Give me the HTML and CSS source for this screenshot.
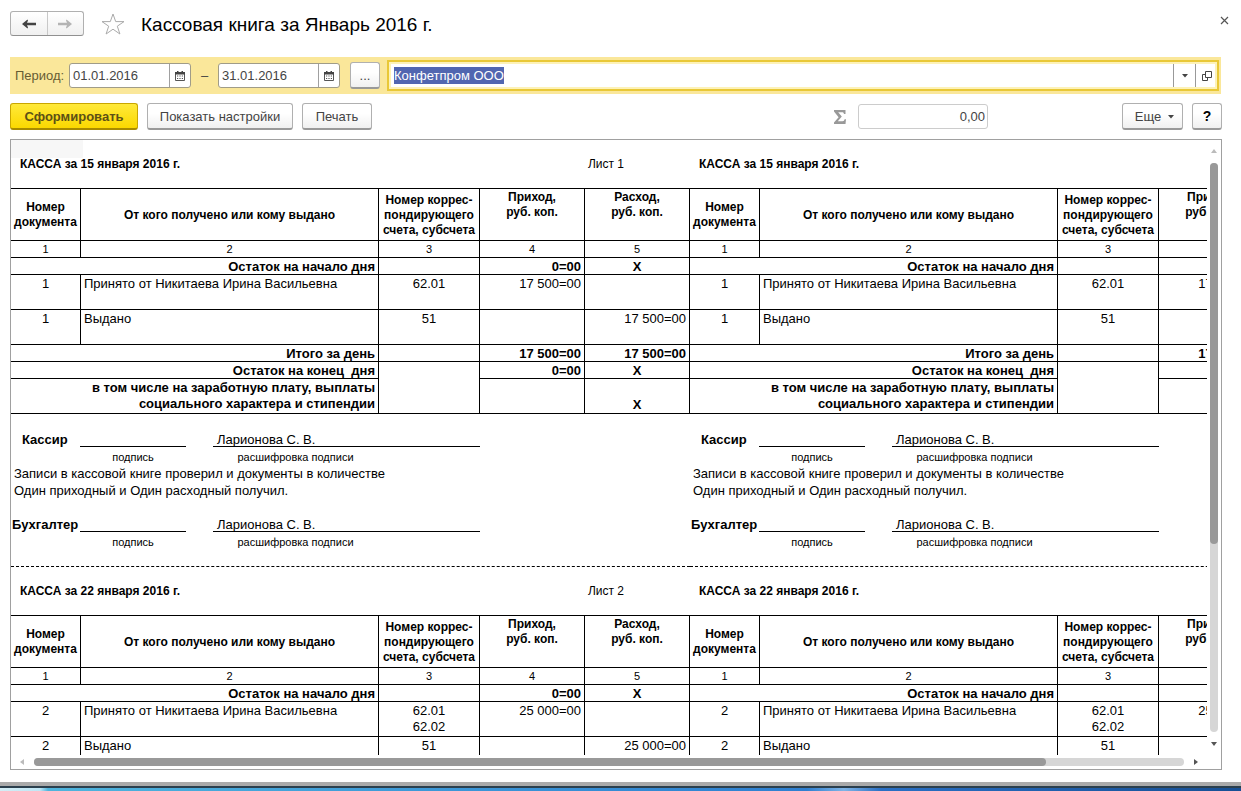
FILE: index.html
```html
<!DOCTYPE html>
<html lang="ru">
<head>
<meta charset="utf-8">
<title>Кассовая книга за Январь 2016 г.</title>
<link rel="stylesheet" href="styles.css">
</head>
<body>
<div class="window">
  <header class="titlebar">
    <div class="nav">
      <button class="nav-btn" type="button" aria-label="Назад"><svg width="14" height="10" viewBox="0 0 14 10"><path d="M0 5 5.500.5 6 1.500 5 3.800H14v2.400H5L6 8.500 5.500 9.500z" fill="#444"/></svg></button>
      <button class="nav-btn" type="button" aria-label="Вперед"><svg width="14" height="10" viewBox="0 0 14 10"><path d="M14 5 8.500.5 8 1.500 9 3.800H0v2.400H9L8 8.500 8.500 9.500z" fill="#b4b4b4"/></svg></button>
    </div>
    <button class="plain star" type="button" aria-label="Избранное"><svg width="24" height="22" viewBox="0 0 24 22"><path d="M12 1 14.700 8.600H23L16.300 13.200 18.900 21 12 16.200 5.100 21 7.700 13.200 1 8.600H9.300z" fill="#fff" stroke="#aaa"/></svg></button>
    <h1>Кассовая книга за Январь 2016 г.</h1>
    <button class="plain close" type="button" aria-label="Закрыть"><svg width="9" height="9" viewBox="0 0 9 9"><path d="M1 1 8 8M8 1 1 8" stroke="#555" stroke-width="1.200"/></svg></button>
  </header>

  <div class="params">
    <label class="period" for="from">Период:</label>
    <div class="date">
      <input id="from" type="text" value="01.01.2016">
      <button type="button" aria-label="Календарь"><svg width="10" height="10" viewBox="0 0 10 10"><path d="M.5 1.500h9v8h-9z" fill="#fff" stroke="#555"/><path d="M0 1h10v2.500H0zM2 0h1.500v1H2zM6.500 0H8v1H6.500z" fill="#444"/><path d="M2 5h6M2 7.500h6" stroke="#555" stroke-dasharray="1.200"/></svg></button>
    </div>
    <span class="dash">–</span>
    <div class="date">
      <input type="text" value="31.01.2016" aria-label="Конец периода">
      <button type="button" aria-label="Календарь"><svg width="10" height="10" viewBox="0 0 10 10"><path d="M.5 1.500h9v8h-9z" fill="#fff" stroke="#555"/><path d="M0 1h10v2.500H0zM2 0h1.500v1H2zM6.500 0H8v1H6.500z" fill="#444"/><path d="M2 5h6M2 7.500h6" stroke="#555" stroke-dasharray="1.200"/></svg></button>
    </div>
    <button class="btn dots" type="button">...</button>
    <div class="org">
      <div class="org-value" role="textbox" contenteditable="true" aria-label="Организация"><mark>Конфетпром ООО</mark></div>
      <button type="button" aria-label="Выбрать"><svg width="6" height="4" viewBox="0 0 6 4"><path d="M0 0h6L3 3.500z" fill="#444"/></svg></button>
      <button type="button" aria-label="Открыть"><svg width="10" height="10" viewBox="0 0 10 10"><path d="M3.500.5h6v6h-6zM3.500 3.500h-3v6h5v-3" fill="none" stroke="#444"/></svg></button>
    </div>
  </div>

  <div class="toolbar">
    <button class="btn primary" type="button">Сформировать</button>
    <button class="btn settings" type="button">Показать настройки</button>
    <button class="btn print" type="button">Печать</button>
    <label class="sigma" for="sum" aria-label="Сумма"><svg width="12" height="14" viewBox="0 0 12 14"><path d="M0 0H11.500V4H10C9.800 2.500 9 2.200 8 2.200H4.200L7.800 6.600 3.800 11.300H8.500C9.800 11.300 10.300 10.500 10.600 9.300H12L11.500 14H0V12.600L4.600 7.200 0 1.500z" fill="#999"/></svg></label>
    <input class="sum" id="sum" type="text" value="0,00">
    <button class="btn more" type="button">Еще <svg width="6" height="4" viewBox="0 0 6 4"><path d="M0 0h6L3 3.500z" fill="#444"/></svg></button>
    <button class="btn help" type="button">?</button>
  </div>

  <main class="report">
    <div class="viewport">
      <div class="sheet">
        <section class="copy">
          <div class="head selected"><b>КАССА за 15 января 2016 г.</b><span>Лист 1</span></div>
          <table>
            <colgroup><col class="c1"><col class="c2"><col class="c3"><col class="c4"><col class="c4"></colgroup>
            <thead>
              <tr class="cap"><th>Номер<br>документа</th><th>От кого получено или кому выдано</th><th>Номер коррес-<br>пондирующего<br>счета, субсчета</th><th class="top">Приход,<br>руб. коп.</th><th class="top">Расход,<br>руб. коп.</th></tr>
              <tr class="num"><td>1</td><td>2</td><td>3</td><td>4</td><td>5</td></tr>
            </thead>
            <tbody>
              <tr class="total"><td class="r" colspan="2">Остаток на начало дня</td><td></td><td class="r">0=00</td><td>X</td></tr>
              <tr class="row"><td>1</td><td class="l">Принято от Никитаева Ирина Васильевна</td><td>62.01</td><td class="r">17 500=00</td><td></td></tr>
              <tr class="row"><td>1</td><td class="l">Выдано</td><td>51</td><td></td><td class="r">17 500=00</td></tr>
              <tr class="total"><td class="r" colspan="2">Итого за день</td><td></td><td class="r">17 500=00</td><td class="r">17 500=00</td></tr>
              <tr class="total"><td class="r" colspan="2">Остаток на конец&nbsp; дня</td><td rowspan="2"></td><td class="r">0=00</td><td>X</td></tr>
              <tr class="total tall"><td class="r" colspan="2">в том числе на заработную плату, выплаты<br>социального характера и стипендии</td><td></td><td class="b">X</td></tr>
            </tbody>
          </table>
          <div class="signs">
            <div class="sign"><b class="cashier">Кассир</b><span class="line"></span><span class="line name">Ларионова С. В.</span></div>
            <div class="sign hint"><span></span><span>подпись</span><span class="full">расшифровка подписи</span></div>
            <p>Записи в кассовой книге проверил и документы в количестве<br>Один приходный и Один расходный получил.</p>
            <div class="sign"><b>Бухгалтер</b><span class="line"></span><span class="line name">Ларионова С. В.</span></div>
            <div class="sign hint"><span></span><span>подпись</span><span class="full">расшифровка подписи</span></div>
          </div>
        </section>
        <section class="copy">
          <div class="head"><b>КАССА за 15 января 2016 г.</b></div>
          <table>
            <colgroup><col class="c1"><col class="c2"><col class="c3"><col class="c4"><col class="c4"></colgroup>
            <thead>
              <tr class="cap"><th>Номер<br>документа</th><th>От кого получено или кому выдано</th><th>Номер коррес-<br>пондирующего<br>счета, субсчета</th><th class="top">Приход,<br>руб. коп.</th><th></th></tr>
              <tr class="num"><td>1</td><td>2</td><td>3</td><td></td><td></td></tr>
            </thead>
            <tbody>
              <tr class="total"><td class="r" colspan="2">Остаток на начало дня</td><td></td><td></td><td></td></tr>
              <tr class="row"><td>1</td><td class="l">Принято от Никитаева Ирина Васильевна</td><td>62.01</td><td class="r">17 500=00</td><td></td></tr>
              <tr class="row"><td>1</td><td class="l">Выдано</td><td>51</td><td></td><td></td></tr>
              <tr class="total"><td class="r" colspan="2">Итого за день</td><td></td><td class="r">17 500=00</td><td></td></tr>
              <tr class="total"><td class="r" colspan="2">Остаток на конец&nbsp; дня</td><td rowspan="2"></td><td></td><td></td></tr>
              <tr class="total tall"><td class="r" colspan="2">в том числе на заработную плату, выплаты<br>социального характера и стипендии</td><td></td><td></td></tr>
            </tbody>
          </table>
          <div class="signs">
            <div class="sign"><b class="cashier">Кассир</b><span class="line"></span><span class="line name">Ларионова С. В.</span></div>
            <div class="sign hint"><span></span><span>подпись</span><span class="full">расшифровка подписи</span></div>
            <p>Записи в кассовой книге проверил и документы в количестве<br>Один приходный и Один расходный получил.</p>
            <div class="sign"><b>Бухгалтер</b><span class="line"></span><span class="line name">Ларионова С. В.</span></div>
            <div class="sign hint"><span></span><span>подпись</span><span class="full">расшифровка подписи</span></div>
          </div>
        </section>
      </div>
      <div class="sheet">
        <section class="copy">
          <div class="head"><b>КАССА за 22 января 2016 г.</b><span>Лист 2</span></div>
          <table>
            <colgroup><col class="c1"><col class="c2"><col class="c3"><col class="c4"><col class="c4"></colgroup>
            <thead>
              <tr class="cap"><th>Номер<br>документа</th><th>От кого получено или кому выдано</th><th>Номер коррес-<br>пондирующего<br>счета, субсчета</th><th class="top">Приход,<br>руб. коп.</th><th class="top">Расход,<br>руб. коп.</th></tr>
              <tr class="num"><td>1</td><td>2</td><td>3</td><td>4</td><td>5</td></tr>
            </thead>
            <tbody>
              <tr class="total"><td class="r" colspan="2">Остаток на начало дня</td><td></td><td class="r">0=00</td><td>X</td></tr>
              <tr class="row"><td>2</td><td class="l">Принято от Никитаева Ирина Васильевна</td><td>62.01<br>62.02</td><td class="r">25 000=00</td><td></td></tr>
              <tr class="row"><td>2</td><td class="l">Выдано</td><td>51</td><td></td><td class="r">25 000=00</td></tr>
            </tbody>
          </table>
        </section>
        <section class="copy">
          <div class="head"><b>КАССА за 22 января 2016 г.</b></div>
          <table>
            <colgroup><col class="c1"><col class="c2"><col class="c3"><col class="c4"><col class="c4"></colgroup>
            <thead>
              <tr class="cap"><th>Номер<br>документа</th><th>От кого получено или кому выдано</th><th>Номер коррес-<br>пондирующего<br>счета, субсчета</th><th class="top">Приход,<br>руб. коп.</th><th></th></tr>
              <tr class="num"><td>1</td><td>2</td><td>3</td><td></td><td></td></tr>
            </thead>
            <tbody>
              <tr class="total"><td class="r" colspan="2">Остаток на начало дня</td><td></td><td></td><td></td></tr>
              <tr class="row"><td>2</td><td class="l">Принято от Никитаева Ирина Васильевна</td><td>62.01<br>62.02</td><td class="r">25 000=00</td><td></td></tr>
              <tr class="row"><td>2</td><td class="l">Выдано</td><td>51</td><td></td><td></td></tr>
            </tbody>
          </table>
        </section>
      </div>
    </div>
    <div class="vbar">
      <svg width="6" height="4" viewBox="0 0 6 4"><path d="M0 4h6L3 0z" fill="#bbb"/></svg>
      <div class="track"><div class="thumb"></div></div>
      <svg width="6" height="4" viewBox="0 0 6 4"><path d="M0 0h6L3 4z" fill="#555"/></svg>
    </div>
    <div class="hbar">
      <svg width="4" height="6" viewBox="0 0 4 6"><path d="M4 0v6L0 3z" fill="#bbb"/></svg>
      <div class="track"><div class="thumb"></div></div>
      <svg width="4" height="6" viewBox="0 0 4 6"><path d="M0 0v6L4 3z" fill="#555"/></svg>
    </div>
  </main>
  <footer class="taskbar"></footer>
</div>
</body>
</html>
```
FILE: styles.css
```css
* { box-sizing: border-box; }
body {
  margin: 0;
  background: #fff;
  color: #000;
  font: 13px/17px "Liberation Sans", Arial, sans-serif;
}
button, input { font: inherit; color: #444; margin: 0; padding: 0; }
button { display: flex; align-items: center; justify-content: center; }
svg { display: block; flex: none; }

.window { display: flex; flex-direction: column; height: 100vh; overflow: hidden; }

.titlebar { display: flex; align-items: center; height: 47px; padding: 0 8px 0 10px; flex: none; }
.nav {
  display: flex;
  width: 74px;
  height: 25px;
  border: 1px solid #b0b0b0;
  border-bottom-color: #909090;
  border-radius: 3px;
  background: linear-gradient(#fff, #f0f0f0);
}
.nav-btn { flex: 1; border: 0; background: none; }
.nav-btn + .nav-btn { border-left: 1px solid #c8c8c8; }
.plain { border: 0; background: none; }
.star { margin: 0 16px 0 17px; }
h1 { margin: 0; padding-top: 2px; font-size: 19px; line-height: 24px; font-weight: 400; }
.close { width: 17px; height: 17px; margin: 0 0 6px auto; }

.params {
  display: flex;
  align-items: center;
  flex: none;
  height: 37px;
  margin: 10px 20px 0 10px;
  padding-left: 5px;
  background: #fae79a;
}
.period { width: 54px; color: #665c33; }
.date {
  display: flex;
  width: 122px;
  height: 25px;
  border: 1px solid #a09c88;
  border-radius: 3px;
  background: #fff;
  overflow: hidden;
}
.date input { flex: 1; min-width: 0; border: 0; padding-left: 3px; background: none; }
.date button { width: 21px; border: 0; border-left: 1px solid #a0a0a0; background: none; }
.dash { width: 27px; text-align: center; color: #444; }
.btn {
  height: 27px;
  border: 1px solid #b0b0b0;
  border-bottom: 2px solid #999;
  border-radius: 3px;
  background: linear-gradient(#fff 40%, #f0f0f0);
}
.dots { width: 30px; margin-left: 10px; }
.org {
  display: flex;
  flex: 1;
  height: 31px;
  margin: 0 2px 0 7px;
  border: 2px solid #e9c837;
  box-shadow: inset 0 0 0 2px #fdf2b8;
  background: #fff;
}
.org-value { flex: 1; padding: 5px; outline: 0; }
mark { display: inline-block; background: #5166b0; color: #fff; }
.org button { width: 22px; margin: 2px 0; border: 0; border-left: 1px solid #999; background: none; }

.toolbar { display: flex; align-items: center; flex: none; height: 27px; margin: 9px 19px 9px 10px; }
.primary {
  width: 128px;
  border-color: #c9a600;
  border-bottom-color: #a98b00;
  background: linear-gradient(#ffe93a, #fbd800);
  color: #5c5016;
  font-weight: 700;
}
.settings { width: 146px; margin-left: 9px; }
.print { width: 70px; margin-left: 9px; }
.sigma { margin: 0 12px 0 auto; }
.sum {
  width: 130px;
  height: 25px;
  margin-right: 134px;
  border: 1px solid #ccc;
  border-radius: 3px;
  padding-right: 2px;
  text-align: right;
}
.more { width: 61px; gap: 7px; padding-left: 4px; }
.more svg { margin-top: 2px; }
.help { width: 30px; margin-left: 9px; color: #000; font-size: 14px; font-weight: 700; }

.report {
  display: grid;
  grid-template: minmax(0, 1fr) 14px / minmax(0, 1fr) 14px;
  flex: 1;
  min-height: 0;
  margin: 0 19px 12px 10px;
  border: 1px solid #a0a0a0;
}
.viewport { overflow: hidden; }
.sheet { display: flex; width: max-content; }
.copy { width: 679px; }
.head { display: flex; justify-content: space-between; height: 48px; padding: 16px 66px 0 9px; font-size: 12px; }
.selected { background: linear-gradient(#f7f7f7, #f7f7f7) no-repeat 0 0 / 72px 18px; }

table { width: 100%; table-layout: fixed; border-spacing: 0; border-top: 1px solid #000; }
.c1 { width: 70px; }
.c2 { width: 298px; }
.c3 { width: 101px; }
.c4 { width: 105px; }
th, td {
  padding: 0 3px;
  border: solid #000;
  border-width: 0 1px 1px 0;
  text-align: center;
  line-height: 16px;
}
th { padding: 1px 0 0; font-size: 12px; line-height: 15px; }
.top { vertical-align: top; }
.cap { height: 52px; }
.num, .total { height: 17px; }
.num { font-size: 11px; }
.row { height: 35px; vertical-align: top; }
.row td { padding-top: 1px; }
.total { font-weight: 700; }
.total td { padding-top: 2px; line-height: 14px; }
.total.tall td { padding-top: 0; line-height: 16px; }
.tall { height: 35px; }
.l { text-align: left; }
.r { text-align: right; }
.b { vertical-align: bottom; }

.signs { padding-top: 16px; height: 153px; border-bottom: 1px dashed #000; }
.sign { display: grid; grid-template-columns: 69px 106px 267px; height: 17px; line-height: 19px; }
.sign > * { height: 18px; }
.sign > :nth-child(3) { margin-left: 27px; margin-right: -27px; }
.sign b { padding-left: 1px; }
.sign .cashier { padding-left: 11px; }
.sign .line { height: 17px; border-bottom: 1px solid #000; }
.name { padding-left: 4px; }
.sign.hint { height: 18px; padding-top: 2px; line-height: 17px; font-size: 11px; text-align: center; }
.hint .full { padding-right: 102px; }
p { margin: 0 0 16px; padding-left: 3px; }

.vbar, .hbar { display: flex; align-items: center; justify-content: space-between; }
.vbar { flex-direction: column; padding: 9px 0; }
.vbar .track { flex: 1; width: 8px; margin: 10px 0; }
.vbar .thumb { width: 8px; height: 67%; }
.hbar { padding: 0 9px; }
.hbar .track { flex: 1; height: 8px; margin: 0 10px; }
.hbar .thumb { width: 88%; height: 8px; }
.track { border-radius: 4px; background: #d6d6d6; }
.thumb { border-radius: 4px; background: #999; }

.taskbar {
  flex: none;
  height: 9px;
  border-top: 4px solid #aaa;
  background:
    linear-gradient(#2b3f4d, #2b3f4d) no-repeat 0 0 / 100% 2px,
    linear-gradient(90deg, #d4eef6, #bfe6f5 40px, #4fb4dc 48px, #3a93d6 40%, #2f7fd0 65%, #7fb4e6 68%, #2a6fc4 71%, #174f94);
}
```
